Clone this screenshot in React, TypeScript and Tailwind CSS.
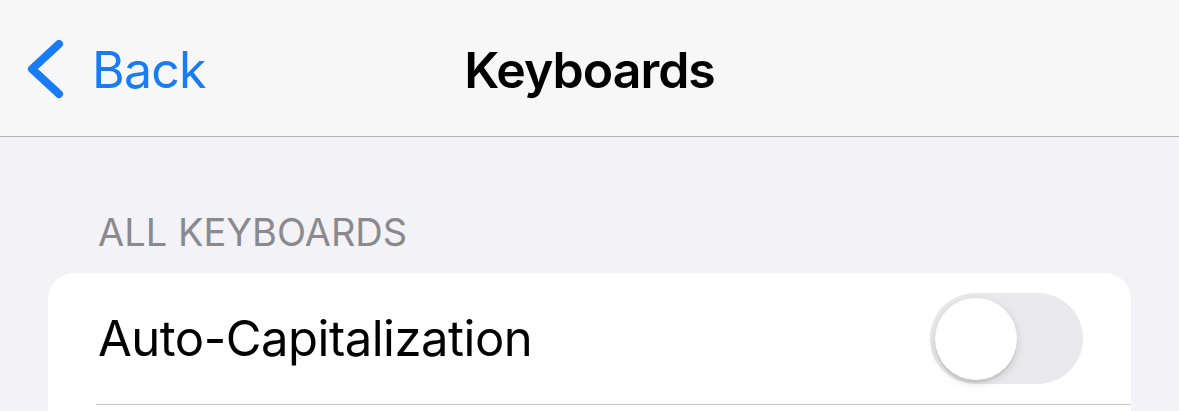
export default function App() {
  return (
    <div className="w-[1179px] h-[411px] overflow-hidden bg-[#f2f2f7] font-['Inter','Liberation_Sans',sans-serif]">
      {/* Nav bar */}
      <div className="h-[137px] bg-[#f7f7f7] border-b border-[#b4b4b6] grid grid-cols-[1fr_auto_1fr] items-center">
        <div className="flex items-center pl-[26px] text-[#1a7cf5] pt-[4px]">
          <svg width="40" height="62" viewBox="0 0 40 62" className="-mt-[2px]">
            <polyline
              points="33,6 6,31 33,56"
              fill="none"
              stroke="currentColor"
              strokeWidth="8"
              strokeLinecap="round"
              strokeLinejoin="round"
            />
          </svg>
          <span className="ml-[26px] text-[50px] leading-none tracking-[-0.8px]">Back</span>
        </div>
        <div className="pt-[4px] text-[50px] leading-none font-semibold text-black tracking-[-1px]">
          Keyboards
        </div>
        <div />
      </div>

      {/* Section header */}
      <div className="pt-[76px] pl-[98px] text-[38px] leading-none text-[#8a8a8e] tracking-[0px]">
        ALL KEYBOARDS
      </div>

      {/* Card */}
      <div className="mt-[22px] mx-[48px] bg-white rounded-[26px]">
        <div className="flex items-center justify-between pl-[50px] pr-[48px] h-[131px]">
          <span className="text-[49px] leading-none text-black tracking-[-0.5px]">
            Auto-Capitalization
          </span>
          <div className="w-[153px] h-[91px] rounded-full bg-[#e9e9eb] p-[5px] flex items-center">
            <div className="w-[82px] h-[82px] rounded-full bg-white shadow-[0_3px_8px_rgba(0,0,0,0.15),0_3px_1px_rgba(0,0,0,0.06)]" />
          </div>
        </div>
        <div className="ml-[48px] h-px bg-[#c6c6c8]" />
        {/* next row continues below the fold */}
        <div className="h-[131px]" />
      </div>
    </div>
  );
}
